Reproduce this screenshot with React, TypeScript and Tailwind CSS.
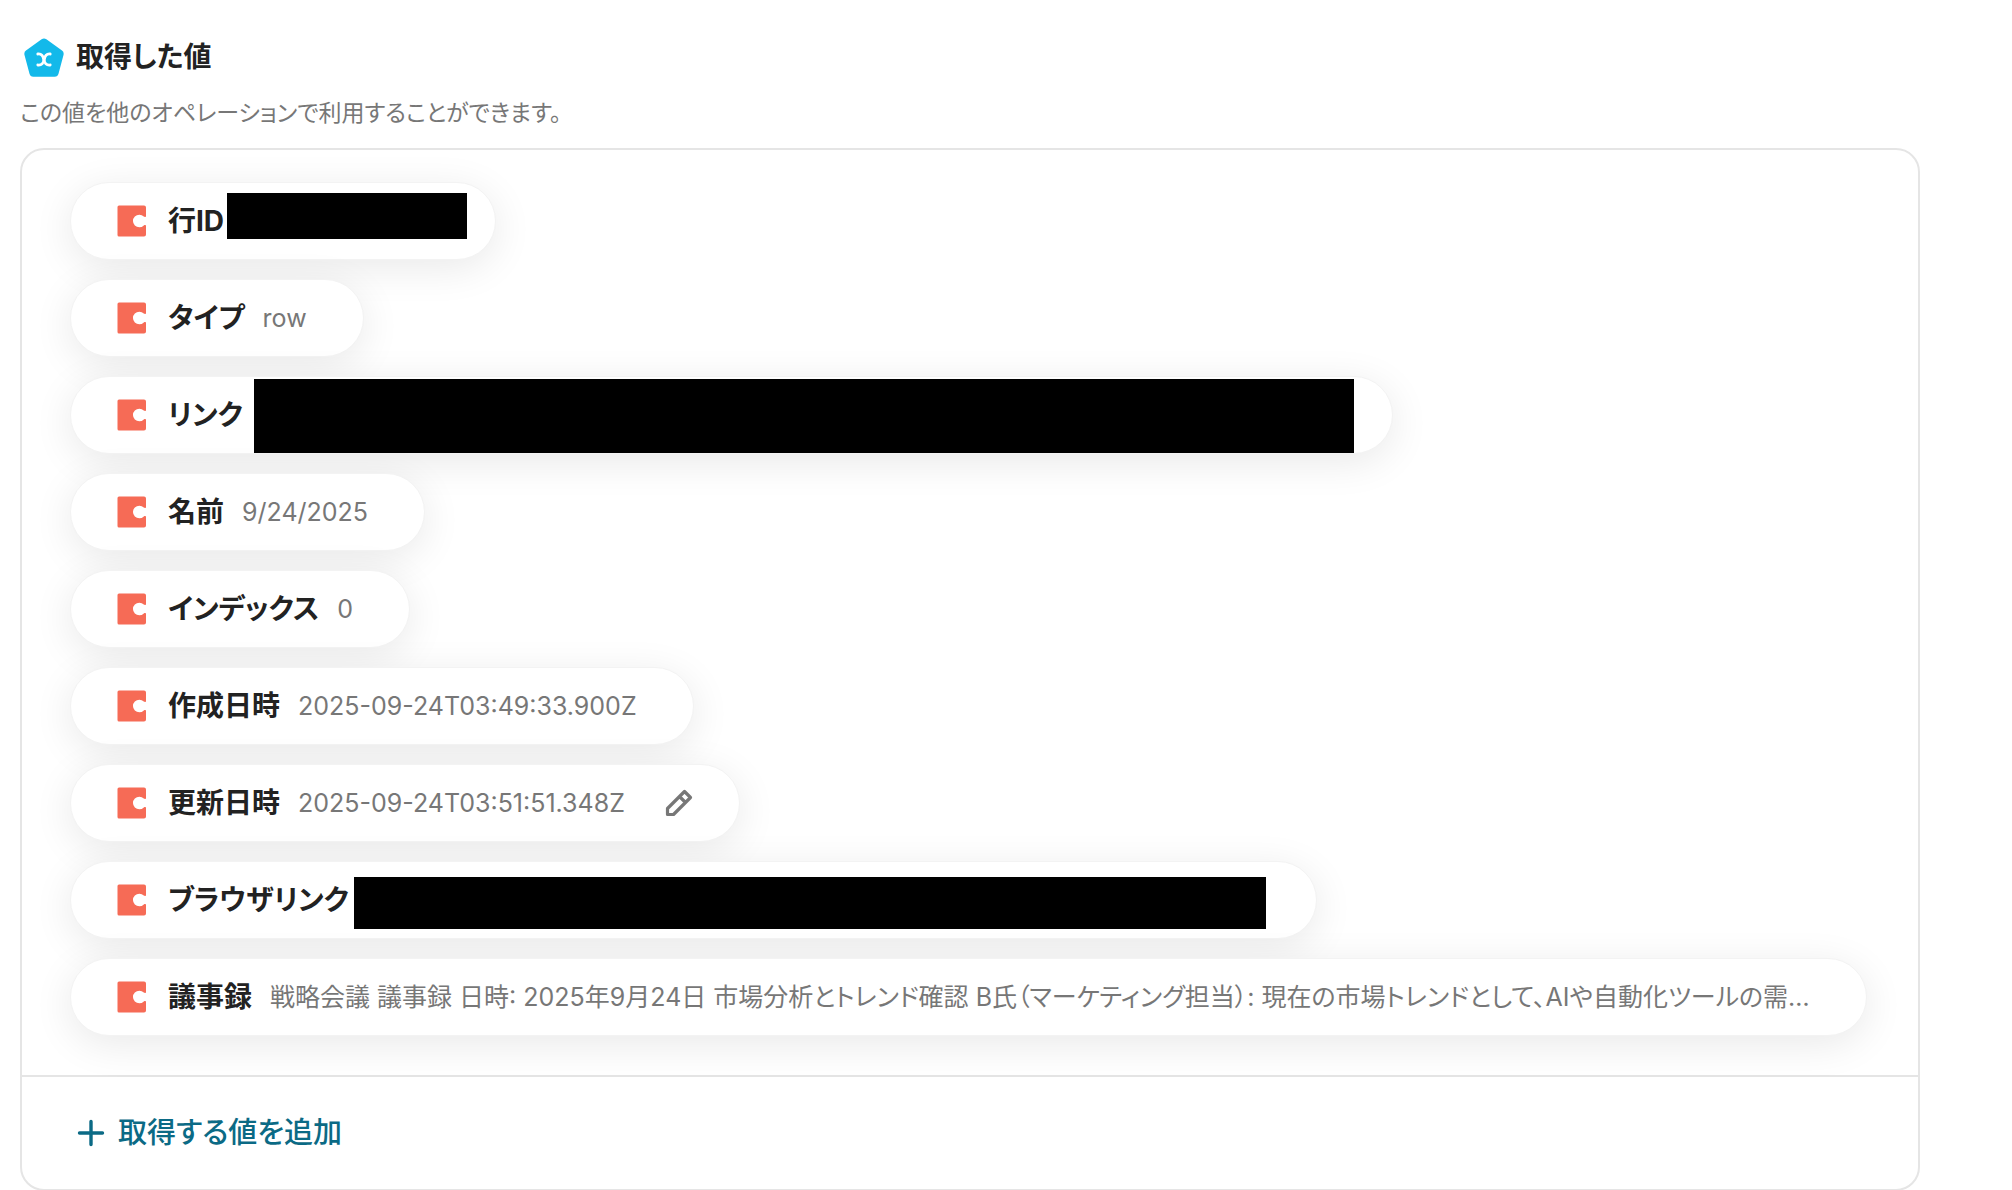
type Field = {
  label: string;
  value?: string;
  redacted?: string;
  editable?: boolean;
};

const fields: Field[] = [
  { label: "行ID", redacted: "mt-[10px] ml-[3px] mr-7 h-[46px] w-60" },
  { label: "タイプ", value: "row" },
  { label: "リンク", redacted: "mt-[2px] ml-[11px] mr-[38px] h-[74px] w-[1100px]" },
  { label: "名前", value: "9/24/2025" },
  { label: "インデックス", value: "0" },
  { label: "作成日時", value: "2025-09-24T03:49:33.900Z" },
  { label: "更新日時", value: "2025-09-24T03:51:51.348Z", editable: true },
  { label: "ブラウザリンク", redacted: "mt-[15px] ml-[5px] mr-[50px] h-[52px] w-[912px]" },
  {
    label: "議事録",
    value:
      "戦略会議 議事録 日時: 2025年9月24日 市場分析とトレンド確認 B氏（マーケティング担当）: 現在の市場トレンドとして、AIや自動化ツールの需…",
  },
];

const OperationIcon = () => (
  <svg viewBox="0 0 40 40" className="size-10 shrink-0" aria-hidden="true">
    <path
      d="M17.6 2.300a4 4 0 0 1 4.800 0L38 13.600a4 4 0 0 1 1.500 4.300l-5 18.900A4 4 0 0 1 30.700 39.700H9.300a4 4 0 0 1-3.800-2.900L.5 17.900A4 4 0 0 1 2 13.600z"
      fill="#13b9ea"
    />
    <path
      d="M13.800 17c3.600-.4 5.500 1.800 5.900 5.500s-2.300 5.900-5.900 5.500M26.200 17c-3.600-.4-5.500 1.800-5.900 5.500s2.300 5.900 5.900 5.500"
      fill="none"
      stroke="#fff"
      strokeWidth="2.800"
      strokeLinecap="round"
    />
  </svg>
);

const CodaIcon = () => (
  <svg viewBox="0 0 30 32" className="h-8 w-[30px] shrink-0" aria-hidden="true">
    <path
      d="M2 .5h25a2 2 0 0 1 2 2v8.500c0 1.200-1.200 1.300-2.200.6a6.300 6.300 0 1 0 0 8.800c1-.7 2.200-.6 2.200.6v8.500a2 2 0 0 1-2 2H2a1.500 1.500 0 0 1-1.500-1.500V2A1.500 1.500 0 0 1 2 .5z"
      fill="#f66b56"
    />
  </svg>
);

const PencilIcon = () => (
  <svg
    viewBox="0 0 28 28"
    className="size-7"
    fill="none"
    stroke="#777"
    strokeWidth="3.200"
    strokeLinejoin="round"
    aria-hidden="true"
  >
    <path d="M2.500 25.500v-6L19.500 2.500l6 6-17 17zM14.500 7.500l6 6" />
  </svg>
);

const PlusIcon = () => (
  <svg
    viewBox="0 0 28 28"
    className="size-7"
    stroke="currentColor"
    strokeWidth="3.400"
    strokeLinecap="round"
    aria-hidden="true"
  >
    <path d="M14 2.500v23M2.500 14h23" />
  </svg>
);

const FieldPill = ({ label, value, redacted, editable }: Field) => (
  <li className="flex h-[78px] max-w-full items-center rounded-full border border-[#f3f3f3] bg-white pl-[46px] shadow-[0_8px_40px_rgba(0,0,0,0.09)]">
    <CodaIcon />
    <span className="ml-[21px] shrink-0 text-[28px] leading-10 font-bold whitespace-nowrap text-[#222]">
      {label}
    </span>
    {value && (
      <span
        className={`ml-[18px] truncate text-[25px] leading-9 text-[#777] ${editable ? "" : "mr-14"}`}
      >
        {value}
      </span>
    )}
    {redacted && <span className={`self-start bg-black ${redacted}`} />}
    {editable && (
      <button type="button" aria-label="編集" className="mr-[46px] ml-10">
        <PencilIcon />
      </button>
    )}
  </li>
);

const App = () => {
  return (
    <main
      lang="ja"
      className="pt-9 pr-[92px] pl-5 font-['Inter','Noto_Sans_CJK_JP',sans-serif] [font-feature-settings:'palt']"
    >
      <header>
        <h1 className="flex items-center gap-3 pl-1 text-[28px] leading-[42px] font-bold text-[#222]">
          <OperationIcon />
          取得した値
        </h1>
        <p className="mt-[17px] text-[23px] leading-9 text-[#777]">
          この値を他のオペレーションで利用することができます。
        </p>
      </header>

      <section className="mt-[17px] rounded-3xl border-2 border-[#e5e5e5] bg-white">
        <ul className="flex flex-col items-start gap-[19px] px-12 pt-8 pb-[39px]">
          {fields.map((field) => (
            <FieldPill key={field.label} {...field} />
          ))}
        </ul>
        <div className="border-t-2 border-[#e5e5e5] px-[55px] py-9">
          <button
            type="button"
            className="flex items-center gap-[13px] text-[29px] leading-10 font-medium text-[#0b6a85]"
          >
            <PlusIcon />
            取得する値を追加
          </button>
        </div>
      </section>
    </main>
  );
};

export default App;
